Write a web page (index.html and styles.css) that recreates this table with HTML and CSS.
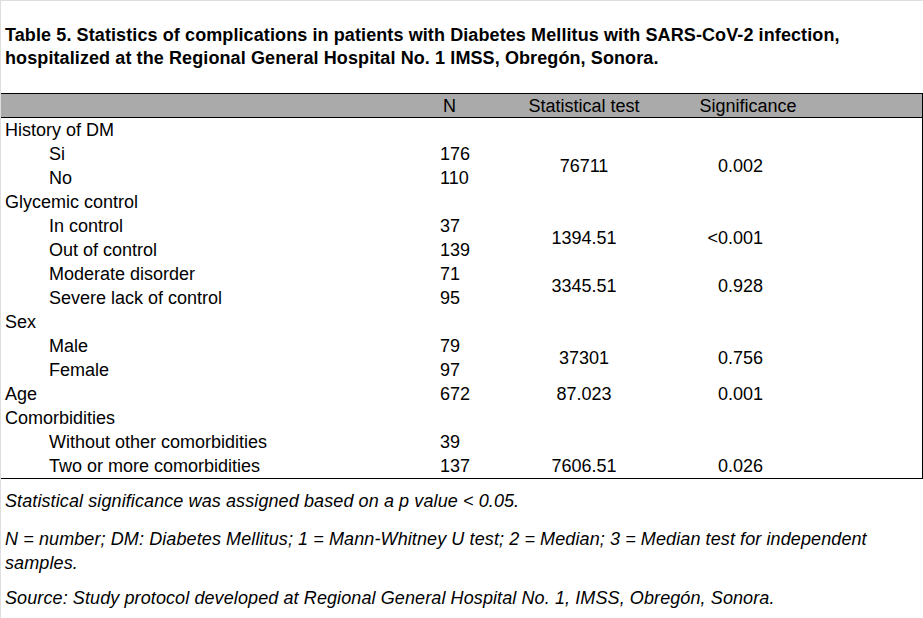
FILE: index.html
```html
<!DOCTYPE html>
<html lang="en">
<head>
<meta charset="utf-8">
<title>Table 5</title>
<link rel="stylesheet" href="styles.css">
</head>
<body>
<div class="page">
  <h1 class="title">Table 5. Statistics of complications in patients with Diabetes Mellitus with SARS-CoV-2 infection, hospitalized at the Regional General Hospital No. 1 IMSS, Obregón, Sonora.</h1>
  <table class="stats">
    <colgroup>
      <col class="c-label">
      <col class="c-n">
      <col class="c-test">
      <col class="c-sig">
      <col class="c-rest">
    </colgroup>
    <thead>
      <tr>
        <th></th>
        <th class="n-head">N</th>
        <th class="test">Statistical test</th>
        <th class="sig-head">Significance</th>
        <th></th>
      </tr>
    </thead>
    <tbody>
      <tr><td class="cat">History of DM</td><td></td><td></td><td></td><td></td></tr>
      <tr><td class="sub">Si</td><td class="n">176</td><td class="test" rowspan="2">76711</td><td class="sig" rowspan="2">0.002</td><td rowspan="2"></td></tr>
      <tr><td class="sub">No</td><td class="n">110</td></tr>
      <tr><td class="cat">Glycemic control</td><td></td><td></td><td></td><td></td></tr>
      <tr><td class="sub">In control</td><td class="n">37</td><td class="test" rowspan="2">1394.51</td><td class="sig" rowspan="2">&lt;0.001</td><td rowspan="2"></td></tr>
      <tr><td class="sub">Out of control</td><td class="n">139</td></tr>
      <tr><td class="sub">Moderate disorder</td><td class="n">71</td><td class="test" rowspan="2">3345.51</td><td class="sig" rowspan="2">0.928</td><td rowspan="2"></td></tr>
      <tr><td class="sub">Severe lack of control</td><td class="n">95</td></tr>
      <tr><td class="cat">Sex</td><td></td><td></td><td></td><td></td></tr>
      <tr><td class="sub">Male</td><td class="n">79</td><td class="test" rowspan="2">37301</td><td class="sig" rowspan="2">0.756</td><td rowspan="2"></td></tr>
      <tr><td class="sub">Female</td><td class="n">97</td></tr>
      <tr><td class="cat">Age</td><td class="n">672</td><td class="test">87.023</td><td class="sig">0.001</td><td></td></tr>
      <tr><td class="cat">Comorbidities</td><td></td><td></td><td></td><td></td></tr>
      <tr><td class="sub">Without other comorbidities</td><td class="n">39</td><td></td><td></td><td></td></tr>
      <tr><td class="sub">Two or more comorbidities</td><td class="n">137</td><td class="test">7606.51</td><td class="sig">0.026</td><td></td></tr>
    </tbody>
  </table>
  <div class="notes">
    <p class="note n1">Statistical significance was assigned based on a p value &lt; 0.05.</p>
    <p class="note n2">N = number; DM: Diabetes Mellitus; 1 = Mann-Whitney U test; 2 = Median; 3 = Median test for independent samples.</p>
    <p class="note n3">Source: Study protocol developed at Regional General Hospital No. 1, IMSS, Obregón, Sonora.</p>
  </div>
</div>
</body>
</html>
```

FILE: styles.css
```css
html, body {
  margin: 0;
  padding: 0;
  background: #ffffff;
}

body {
  font-family: "Liberation Sans", Arial, sans-serif;
  color: #000000;
}

.page {
  box-sizing: border-box;
  width: 923px;
  min-height: 618px;
  border-top: 1px solid #dedede;
  border-left: 1px solid #dedede;
  padding-top: 23px;
}

.title {
  margin: 0 0 23px 0;
  padding: 0 10px 0 4px;
  font-size: 18px;
  line-height: 23px;
  font-weight: bold;
  letter-spacing: 0.1px;
}

.stats {
  width: 921px;
  border-collapse: collapse;
  table-layout: fixed;
  font-size: 18px;
  border-top: 1px solid #000;
  border-bottom: 1px solid #000;
  border-right: 1px solid #000;
}

.c-label { width: 432px; }
.c-n { width: 70px; }
.c-test { width: 162px; }
.c-sig { width: 166px; }
.c-rest { width: 91px; }

.stats thead tr {
  background: #aaaaaa;
  border-bottom: 1px solid #000;
}

.stats th {
  font-weight: normal;
  height: 23px;
  padding: 0;
  line-height: 21px;
  vertical-align: bottom;
  text-align: left;
}

.stats td {
  padding: 0;
  height: 24px;
  line-height: 24px;
  white-space: nowrap;
}

.stats .n-head { padding-left: 10px; }
.stats th.test, .stats td.test { text-align: center; }
.stats .sig-head { text-align: center; }

.stats .cat { padding-left: 4px; }
.stats .sub { padding-left: 48px; }
.stats .n { padding-left: 7px; }
.stats .sig { text-align: right; padding-right: 68px; }

.notes {
  padding: 0 8px 0 4px;
}

.note {
  margin: 0;
  font-size: 18px;
  line-height: 24px;
  font-style: italic;
  letter-spacing: 0.1px;
}

.n1 { margin-top: 10px; }
.n2 { margin-top: 14px; }
.n3 { margin-top: 11px; }
```
